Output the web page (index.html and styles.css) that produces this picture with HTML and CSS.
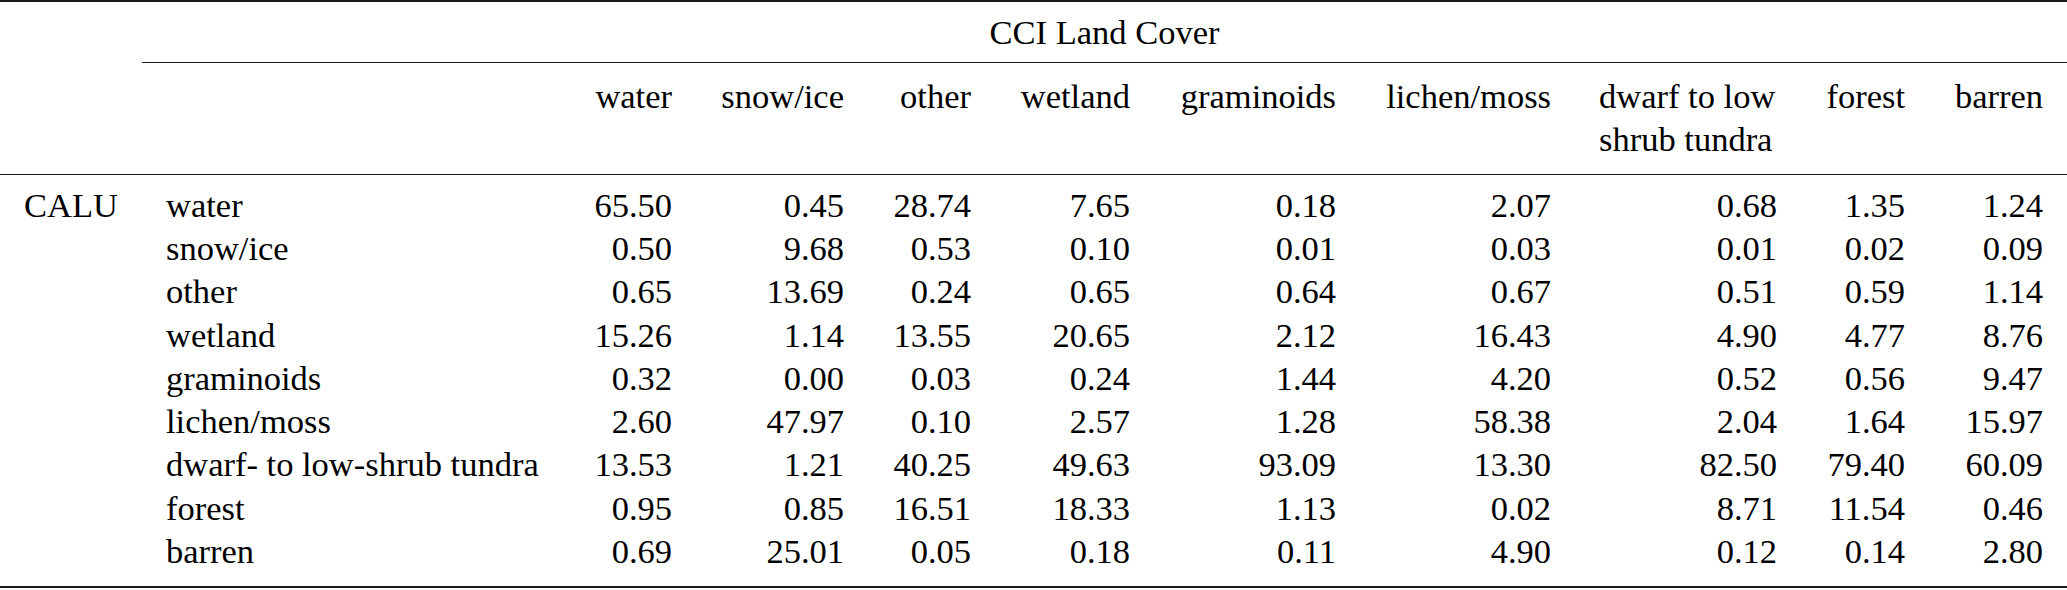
FILE: index.html
```html
<!DOCTYPE html>
<html lang="en">
<head>
<meta charset="utf-8">
<title>CCI Land Cover vs CALU</title>
<link rel="stylesheet" href="styles.css">
</head>
<body>
<table class="tbl">
  <colgroup>
    <col class="c-src">
    <col class="c-lab">
    <col class="c-water">
    <col class="c-snow">
    <col class="c-other">
    <col class="c-wet">
    <col class="c-gram">
    <col class="c-lich">
    <col class="c-dwarf">
    <col class="c-forest">
    <col class="c-barren">
  </colgroup>
  <thead>
    <tr class="r-group">
      <th class="cell blank"></th>
      <th class="cell group" colspan="10">CCI Land Cover</th>
    </tr>
    <tr class="r-head">
      <th class="cell blank"></th>
      <th class="cell blank"></th>
      <th class="cell">water</th>
      <th class="cell">snow/ice</th>
      <th class="cell">other</th>
      <th class="cell">wetland</th>
      <th class="cell">graminoids</th>
      <th class="cell">lichen/moss</th>
      <th class="cell wrap">dwarf to low<br>shrub tundra</th>
      <th class="cell">forest</th>
      <th class="cell">barren</th>
    </tr>
  </thead>
  <tbody>
    <tr class="r-first">
      <td class="cell src">CALU</td><td class="cell lab">water</td>
      <td class="cell">65.50</td><td class="cell">0.45</td><td class="cell">28.74</td><td class="cell">7.65</td><td class="cell">0.18</td><td class="cell">2.07</td><td class="cell">0.68</td><td class="cell">1.35</td><td class="cell">1.24</td>
    </tr>
    <tr>
      <td class="cell src"></td><td class="cell lab">snow/ice</td>
      <td class="cell">0.50</td><td class="cell">9.68</td><td class="cell">0.53</td><td class="cell">0.10</td><td class="cell">0.01</td><td class="cell">0.03</td><td class="cell">0.01</td><td class="cell">0.02</td><td class="cell">0.09</td>
    </tr>
    <tr>
      <td class="cell src"></td><td class="cell lab">other</td>
      <td class="cell">0.65</td><td class="cell">13.69</td><td class="cell">0.24</td><td class="cell">0.65</td><td class="cell">0.64</td><td class="cell">0.67</td><td class="cell">0.51</td><td class="cell">0.59</td><td class="cell">1.14</td>
    </tr>
    <tr>
      <td class="cell src"></td><td class="cell lab">wetland</td>
      <td class="cell">15.26</td><td class="cell">1.14</td><td class="cell">13.55</td><td class="cell">20.65</td><td class="cell">2.12</td><td class="cell">16.43</td><td class="cell">4.90</td><td class="cell">4.77</td><td class="cell">8.76</td>
    </tr>
    <tr>
      <td class="cell src"></td><td class="cell lab">graminoids</td>
      <td class="cell">0.32</td><td class="cell">0.00</td><td class="cell">0.03</td><td class="cell">0.24</td><td class="cell">1.44</td><td class="cell">4.20</td><td class="cell">0.52</td><td class="cell">0.56</td><td class="cell">9.47</td>
    </tr>
    <tr>
      <td class="cell src"></td><td class="cell lab">lichen/moss</td>
      <td class="cell">2.60</td><td class="cell">47.97</td><td class="cell">0.10</td><td class="cell">2.57</td><td class="cell">1.28</td><td class="cell">58.38</td><td class="cell">2.04</td><td class="cell">1.64</td><td class="cell">15.97</td>
    </tr>
    <tr>
      <td class="cell src"></td><td class="cell lab">dwarf- to low-shrub tundra</td>
      <td class="cell">13.53</td><td class="cell">1.21</td><td class="cell">40.25</td><td class="cell">49.63</td><td class="cell">93.09</td><td class="cell">13.30</td><td class="cell">82.50</td><td class="cell">79.40</td><td class="cell">60.09</td>
    </tr>
    <tr>
      <td class="cell src"></td><td class="cell lab">forest</td>
      <td class="cell">0.95</td><td class="cell">0.85</td><td class="cell">16.51</td><td class="cell">18.33</td><td class="cell">1.13</td><td class="cell">0.02</td><td class="cell">8.71</td><td class="cell">11.54</td><td class="cell">0.46</td>
    </tr>
    <tr class="r-last">
      <td class="cell src"></td><td class="cell lab">barren</td>
      <td class="cell">0.69</td><td class="cell">25.01</td><td class="cell">0.05</td><td class="cell">0.18</td><td class="cell">0.11</td><td class="cell">4.90</td><td class="cell">0.12</td><td class="cell">0.14</td><td class="cell">2.80</td>
    </tr>
  </tbody>
</table>
</body>
</html>
```

FILE: styles.css
```css
html, body {
  margin: 0;
  padding: 0;
  background: #ffffff;
}

body {
  font-family: "Liberation Serif", "Times New Roman", serif;
  font-size: 34px;
  color: #000000;
}

.tbl {
  width: 2067px;
  table-layout: fixed;
  border-collapse: separate;
  border-spacing: 0;
  border-top: 2px solid #1a1a1a;
  border-bottom: 2px solid #1a1a1a;
}

.c-src { width: 142px; }
.c-lab { width: 427px; }
.c-water { width: 127px; }
.c-snow { width: 172px; }
.c-other { width: 127px; }
.c-wet { width: 159px; }
.c-gram { width: 206px; }
.c-lich { width: 215px; }
.c-dwarf { width: 226px; }
.c-forest { width: 128px; }
.c-barren { width: 138px; }

.tbl .cell {
  font-family: "Liberation Serif", "Times New Roman", serif;
  font-size: 34.5px;
  font-weight: normal;
  line-height: 43.3px;
  padding: 0 24px;
  text-align: right;
  vertical-align: top;
  white-space: nowrap;
  color: #000000;
}

/* group header row */
.r-group .cell {
  padding-top: 8.7px;
  padding-bottom: 8px;
}

.r-group .group {
  text-align: center;
  border-bottom: 1.5px solid #1a1a1a;
}

/* column header row */
.r-head .cell {
  padding-top: 11.7px;
  padding-bottom: 13.2px;
  border-bottom: 1.5px solid #1a1a1a;
}

.r-head .wrap {
  text-align: left;
}

/* body */
.tbl .src,
.tbl .lab {
  text-align: left;
}

.r-first .cell {
  padding-top: 8.2px;
}

.r-last .cell {
  padding-bottom: 12.6px;
}
```
